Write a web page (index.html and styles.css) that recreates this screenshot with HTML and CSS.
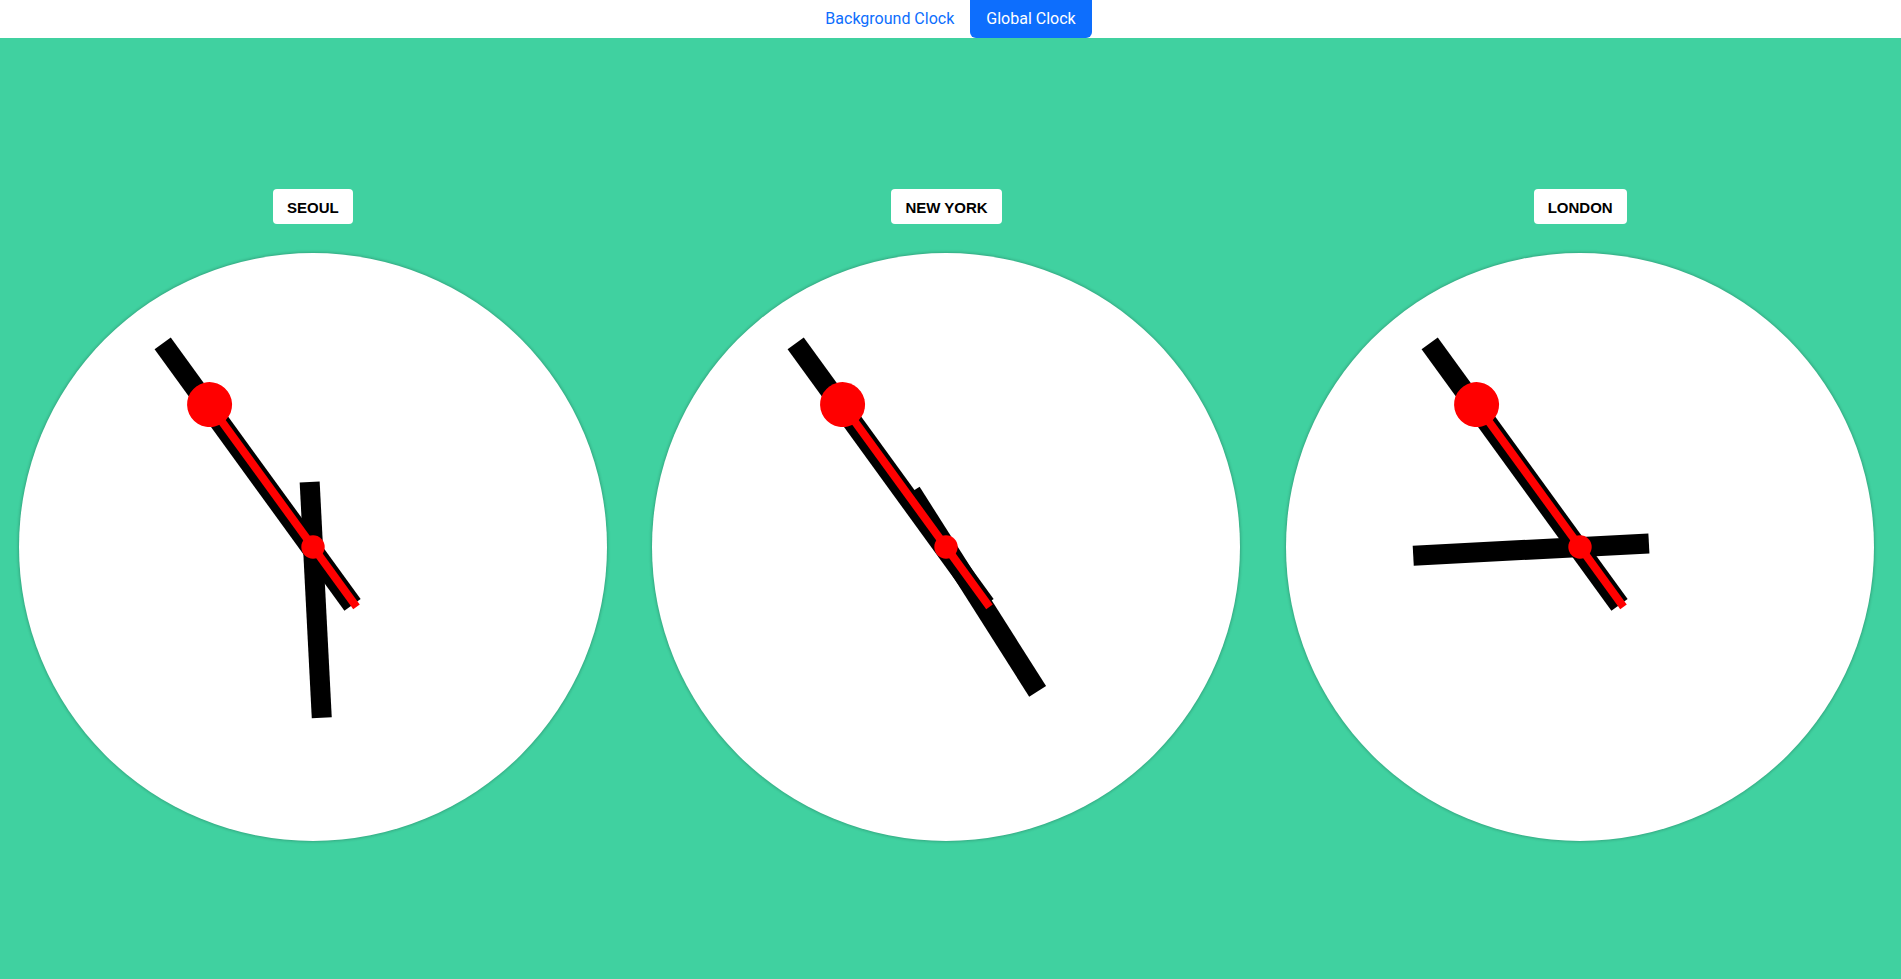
FILE: index.html
```html
<!DOCTYPE html>
<html lang="ko">
<head>
<meta charset="utf-8">
<title>Global Clock</title>
<link rel="stylesheet" href="styles.css">
</head>
<body>
<header class="topbar">
  <nav class="nav-pills">
    <a class="nav-link" href="#">Background Clock</a>
    <a class="nav-link active" href="#">Global Clock</a>
  </nav>
</header>
<main class="stage">
  <div class="clock-row">
    <section class="clock-col">
      <div class="city">SEOUL</div>
      <div class="clock">
        <svg class="face" viewBox="-294 -294 588 588" width="588" height="588">
          <rect class="hand" x="-10" y="-171" width="20" height="236" transform="rotate(177.06)"/>
          <rect class="hand" x="-12" y="-253" width="20" height="323" transform="rotate(324)"/>
          <g transform="rotate(324)">
            <rect class="sec" x="-4" y="-176" width="8" height="250"/>
            <circle class="sec" cx="0" cy="-176" r="22.5"/>
          </g>
          <circle class="sec" cx="0" cy="0" r="11.7"/>
        </svg>
      </div>
    </section>
    <section class="clock-col">
      <div class="city">NEW YORK</div>
      <div class="clock">
        <svg class="face" viewBox="-294 -294 588 588" width="588" height="588">
          <rect class="hand" x="-10" y="-171" width="20" height="236" transform="rotate(147.6)"/>
          <rect class="hand" x="-12" y="-253" width="20" height="323" transform="rotate(324)"/>
          <g transform="rotate(324)">
            <rect class="sec" x="-4" y="-176" width="8" height="250"/>
            <circle class="sec" cx="0" cy="-176" r="22.5"/>
          </g>
          <circle class="sec" cx="0" cy="0" r="11.7"/>
        </svg>
      </div>
    </section>
    <section class="clock-col">
      <div class="city">LONDON</div>
      <div class="clock">
        <svg class="face" viewBox="-294 -294 588 588" width="588" height="588">
          <rect class="hand" x="-10" y="-167" width="20" height="236" transform="rotate(267)"/>
          <rect class="hand" x="-12" y="-253" width="20" height="323" transform="rotate(324)"/>
          <g transform="rotate(324)">
            <rect class="sec" x="-4" y="-176" width="8" height="250"/>
            <circle class="sec" cx="0" cy="-176" r="22.5"/>
          </g>
          <circle class="sec" cx="0" cy="0" r="11.7"/>
        </svg>
      </div>
    </section>
  </div>
</main>
</body>
</html>
```
FILE: styles.css
```css
html, body {
  margin: 0;
  padding: 0;
  height: 100%;
}

body {
  display: flex;
  flex-direction: column;
  background: #ffffff;
  font-family: Roboto, "Noto Sans", sans-serif;
  overflow: hidden;
}

.topbar {
  height: 38px;
  flex: 0 0 38px;
  display: flex;
  justify-content: center;
  background: #ffffff;
}

.nav-pills {
  display: flex;
}

.nav-link {
  display: block;
  padding: 0 16px;
  height: 38px;
  line-height: 37px;
  font-size: 16px;
  color: #0d6efd;
  text-decoration: none;
}

.nav-link.active {
  background: #0d6efd;
  color: #ffffff;
  border-radius: 0 0 6px 6px;
}

.stage {
  flex: 1 1 auto;
  background: #40d1a0;
}

.clock-row {
  display: grid;
  grid-template-columns: repeat(3, 1fr);
  margin: 0 4px 0 -4px;
  padding-top: 151px;
}

.clock-col {
  display: flex;
  flex-direction: column;
  align-items: center;
  gap: 29px;
}

.city {
  height: 35px;
  line-height: 37px;
  padding: 0 14px;
  background: #ffffff;
  border-radius: 4px;
  font-family: "Liberation Sans", Arial, sans-serif;
  font-weight: bold;
  font-size: 15px;
  color: #000000;
  box-sizing: border-box;
}

.clock {
  width: 588px;
  height: 588px;
  border-radius: 50%;
  background: #ffffff;
  box-shadow: 0 0 3px 1px rgba(0, 0, 0, 0.2);
}

.face {
  display: block;
}

.hand {
  fill: #000000;
}

.sec {
  fill: #ff0000;
}
```
